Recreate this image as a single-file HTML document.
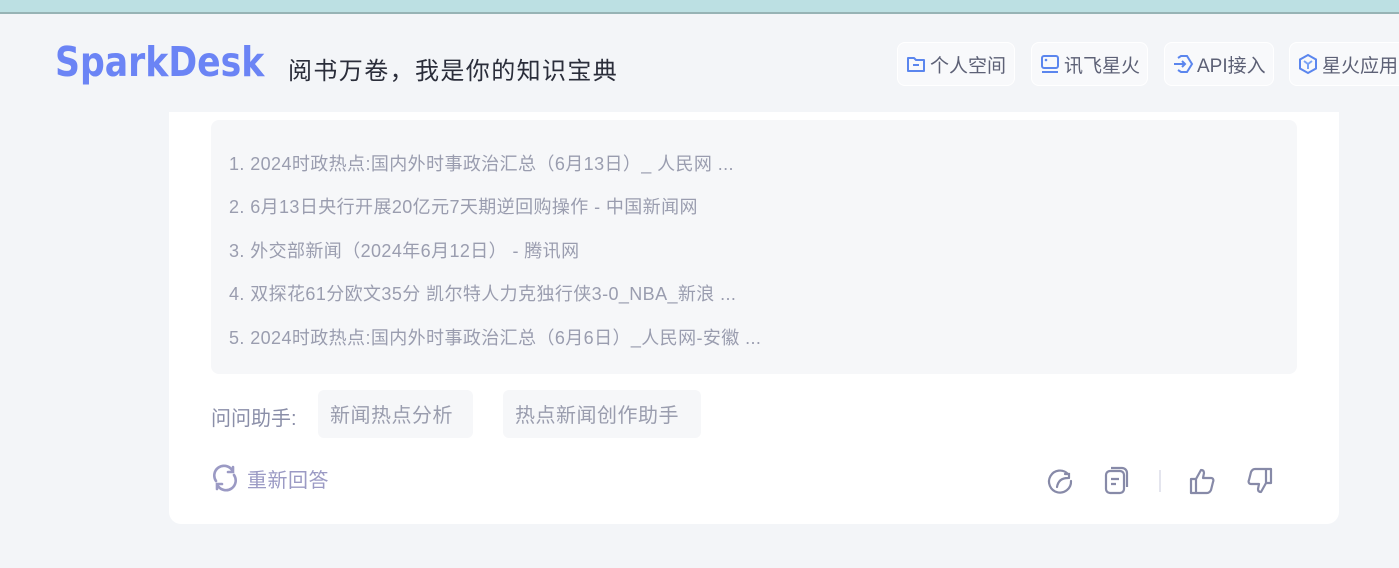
<!DOCTYPE html>
<html><head><meta charset="utf-8"><style>
*{margin:0;padding:0;box-sizing:border-box}
body{width:1399px;height:568px;overflow:hidden;background:#f3f5f8;font-family:"Liberation Sans","Noto Sans CJK SC",sans-serif;position:relative}
.top{position:absolute;left:0;top:0;width:1399px;height:14px;background:#bce0e3;border-bottom:2px solid #97b3b5}
.logo{position:absolute;left:55px;top:38px;font-size:41px;font-weight:bold;color:#6b84f5;font-family:"DejaVu Sans Condensed","Liberation Sans",sans-serif;transform:scaleX(0.94);transform-origin:left}
.slogan{position:absolute;left:288px;top:51px;font-size:24px;color:#2a2d3a;letter-spacing:1.4px}
.btn{position:absolute;top:42px;height:44px;background:#f8f9fb;border:1px solid #fff;border-radius:8px;font-size:19px;color:#5d6176;display:flex;align-items:center;padding-left:7px;gap:3px;white-space:nowrap;overflow:hidden}
.card{position:absolute;left:169px;top:112px;width:1170px;height:412px;background:#fff;border-radius:0 0 12px 12px}
.refs{position:absolute;left:211px;top:120px;width:1086px;height:254px;background:#f6f7f9;border-radius:8px}
.refs div{position:absolute;left:18px;font-size:18px;color:#9a9daf;letter-spacing:0.4px}
.lbl{position:absolute;left:211px;top:402px;font-size:20px;color:#8a8ea8}
.chip{position:absolute;top:390px;height:48px;background:#f6f7f9;border-radius:6px;font-size:20px;color:#9a9dae;line-height:52px;padding:0 12px;letter-spacing:0.5px}
.re{position:absolute;left:247px;top:464px;font-size:20px;color:#9b9ac4;letter-spacing:0.5px}
</style></head><body>
<div class="top"></div>
<div class="logo">SparkDesk</div>
<div class="slogan">阅书万卷，我是你的知识宝典</div>
<div class="btn" style="left:897px;width:118px"><svg width="22" height="22" viewBox="0 0 22 22"><path d="M3 5h6l2 2h8v11H3z" fill="none" stroke="#5b86ee" stroke-width="2" stroke-linejoin="round"/><path d="M8 12h6" stroke="#5b86ee" stroke-width="2"/></svg>个人空间</div>
<div class="btn" style="left:1031px;width:117px"><svg width="22" height="22" viewBox="0 0 22 22"><rect x="3" y="3" width="16" height="12" rx="2" fill="none" stroke="#5b86ee" stroke-width="2"/><circle cx="7" cy="7" r="1.3" fill="#5b86ee"/><path d="M3 19h16" stroke="#5b86ee" stroke-width="2"/></svg>讯飞星火</div>
<div class="btn" style="left:1164px;width:110px"><svg width="22" height="22" viewBox="0 0 22 22"><path d="M6 5l3-2h6l5 8-5 8H9l-3-2" fill="none" stroke="#5b86ee" stroke-width="2"/><path d="M2 11h11M10 8l3 3-3 3" fill="none" stroke="#5b86ee" stroke-width="2"/></svg>API接入</div>
<div class="btn" style="left:1289px;width:130px"><svg width="22" height="22" viewBox="0 0 22 22"><path d="M11 2l8 4.5v9L11 20l-8-4.5v-9z" fill="none" stroke="#5b86ee" stroke-width="2"/><path d="M7 8l4 3 4-3M11 11v5" fill="none" stroke="#7aa3f5" stroke-width="2"/></svg>星火应用</div>
<div class="card"></div>
<div class="refs">
<div style="top:30px">1. 2024时政热点:国内外时事政治汇总（6月13日）_ 人民网 ...</div>
<div style="top:73px">2. 6月13日央行开展20亿元7天期逆回购操作 - 中国新闻网</div>
<div style="top:117px">3. 外交部新闻（2024年6月12日） - 腾讯网</div>
<div style="top:160px">4. 双探花61分欧文35分 凯尔特人力克独行侠3-0_NBA_新浪 ...</div>
<div style="top:204px">5. 2024时政热点:国内外时事政治汇总（6月6日）_人民网-安徽 ...</div>
</div>
<div class="lbl">问问助手:</div>
<div class="chip" style="left:318px;width:155px">新闻热点分析</div>
<div class="chip" style="left:503px;width:198px">热点新闻创作助手</div>
<svg style="position:absolute;left:211px;top:464px" width="28" height="28" viewBox="0 0 28 28"><path d="M5 17A9.5 9.5 0 0 1 21 6M23 11A9.5 9.5 0 0 1 7 22" fill="none" stroke="#9b9ac4" stroke-width="2.6" stroke-linecap="round"/><path d="M22 3v5h-5M6 25v-5h5" fill="none" stroke="#9b9ac4" stroke-width="2.6" stroke-linecap="round"/></svg>
<div class="re">重新回答</div>
<svg style="position:absolute;left:1046px;top:466px" width="30" height="30" viewBox="0 0 30 30"><path d="M22 8A11 11 0 1 0 25 15" fill="none" stroke="#878aa8" stroke-width="2.2" stroke-linecap="round"/><path d="M11 21c1-6 5-9 11-9M19 8h4v4" fill="none" stroke="#878aa8" stroke-width="2.2" stroke-linecap="round"/></svg>
<svg style="position:absolute;left:1103px;top:464px" width="32" height="32" viewBox="0 0 32 32"><rect x="3" y="7" width="18" height="22" rx="4" fill="none" stroke="#878aa8" stroke-width="2.2"/><path d="M8 4h11a5 5 0 0 1 5 5v14" fill="none" stroke="#878aa8" stroke-width="2.2"/><path d="M8 15h8M8 20h5" stroke="#878aa8" stroke-width="2.2"/></svg>
<div style="position:absolute;left:1159px;top:470px;width:2px;height:22px;background:#e4e5ee"></div>
<svg style="position:absolute;left:1188px;top:466px" width="30" height="30" viewBox="0 0 30 30"><path d="M3 13h5v14H3zM8 13l5-9c2 0 3 1 3 3l-1 5h8c2 0 3 2 2 4l-2 8c-1 2-2 3-4 3H8" fill="none" stroke="#878aa8" stroke-width="2.2" stroke-linejoin="round"/></svg>
<svg style="position:absolute;left:1244px;top:466px" width="30" height="30" viewBox="0 0 30 30"><path d="M22 3h5v14h-5zM22 17l-5 9c-2 0-3-1-3-3l1-5H7c-2 0-3-2-2-4l2-8c1-2 2-3 4-3h11" fill="none" stroke="#878aa8" stroke-width="2.2" stroke-linejoin="round"/></svg>
</body></html>
